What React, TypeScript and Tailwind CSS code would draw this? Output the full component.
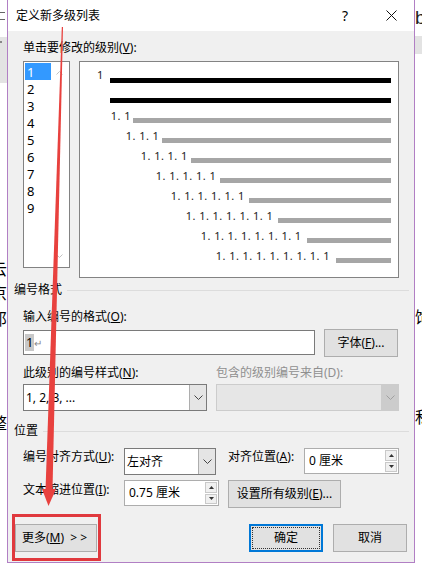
import React from 'react'

const Label = ({ children, className = '' }: { children: React.ReactNode; className?: string }) => (
  <div className={`text-[12px] leading-[16px] whitespace-nowrap ${className}`}>{children}</div>
)

const Btn = ({ children, className = '' }: { children: React.ReactNode; className?: string }) => (
  <div className={`flex items-center justify-center bg-[#e1e1e1] border border-[#adadad] text-[12px] leading-[16px] ${className}`}>
    {children}
  </div>
)

const Chevron = ({ color = '#555' }: { color?: string }) => (
  <svg width="9" height="5" viewBox="0 0 9 5">
    <path d="M0.5 0.5 L4.5 4.5 L8.5 0.5" fill="none" stroke={color} strokeWidth="1" />
  </svg>
)

const Select = ({ value, className = '', disabled = false }: { value: string; className?: string; disabled?: boolean }) => (
  <div
    className={`flex border ${disabled ? 'border-[#cccccc] bg-[#e6e6e6]' : 'border-[#7a7a7a] bg-white'} ${className}`}
  >
    <div className="flex-1 flex items-center pl-[2px] text-[12px] leading-[16px]">{value}</div>
    <div
      className={`w-[17px] flex items-center justify-center border-l ${
        disabled ? 'border-[#cccccc] bg-[#cccccc]' : 'border-[#adadad] bg-[#e5e5e5]'
      }`}
    >
      <Chevron color={disabled ? '#a0a0a0' : '#444'} />
    </div>
  </div>
)

const Spinner = ({ value, className = '' }: { value: string; className?: string }) => (
  <div className={`flex border border-[#adadad] bg-white ${className}`}>
    <div className="flex-1 flex items-center pl-[4px] text-[12px] leading-[16px]">{value}</div>
    <div className="w-[14px] flex flex-col gap-[1px] p-[1px]">
      <div className="flex-1 flex items-center justify-center bg-[#f0f0f0] border border-[#c9c9c9]">
        <svg width="5" height="3" viewBox="0 0 5 3">
          <path d="M0 3 L2.5 0 L5 3 Z" fill="#333" />
        </svg>
      </div>
      <div className="flex-1 flex items-center justify-center bg-[#f0f0f0] border border-[#c9c9c9]">
        <svg width="5" height="3" viewBox="0 0 5 3">
          <path d="M0 0 L2.5 3 L5 0 Z" fill="#333" />
        </svg>
      </div>
    </div>
  </div>
)

const Heading = ({ children }: { children: React.ReactNode }) => (
  <div className="flex items-center pl-[6px] pr-[5px]">
    <Label>{children}</Label>
    <div className="flex-1 h-px bg-[#dcdcdc] ml-[5px]" />
  </div>
)

const levels = ['1', '2', '3', '4', '5', '6', '7', '8', '9']

const Preview = () => {
  const rows = Array.from({ length: 8 }, (_, k) => Array(k + 2).fill('1').join('. '))
  return (
    <div className="w-[320px] h-[217px] ml-[9px] bg-white border border-[#838383] pt-[1px] pr-[7px] flex flex-col">
      <div className="h-[20px] flex items-end pl-[17px]">
        <span className="w-[13px] text-[11px] leading-[12px] text-[#222] mb-[2px]">1</span>
        <div className="flex-1 h-[5px] bg-black" />
      </div>
      <div className="h-[20px] flex items-end pl-[30px]">
        <div className="flex-1 h-[5px] bg-black" />
      </div>
      {rows.map((t, k) => (
        <div key={k} className="h-[20px] flex items-end" style={{ paddingLeft: 30.7 + 15 * k }}>
          <span
            className="shrink-0 text-[11px] leading-[12px] tracking-[0.45px] text-[#222] whitespace-nowrap mb-[1px]"
            style={{ width: 22.3 + 14 * k }}
          >
            {t}
          </span>
          <div className="flex-1 h-[5px] bg-[#a6a6a6]" />
        </div>
      ))}
    </div>
  )
}

const LevelList = () => (
  <div className="w-[47px] h-[207px] bg-white border border-[#828282] flex p-[1px]">
    <div className="w-[26px] flex flex-col">
      {levels.map((l, i) => (
        <div
          key={l}
          className={`h-[17px] flex items-center pl-[2px] text-[13px] leading-[16px] ${
            i === 0 ? 'bg-[#3399ff] text-white' : 'text-black'
          }`}
        >
          {l}
        </div>
      ))}
    </div>
    <div className="flex-1 flex flex-col items-center justify-between py-[8px]">
      <svg width="7" height="4" viewBox="0 0 7 4">
        <path d="M0.5 3.5 L3.5 0.5 L6.5 3.5" fill="none" stroke="#c2c2c2" />
      </svg>
      <svg width="7" height="4" viewBox="0 0 7 4">
        <path d="M0.5 0.5 L3.5 3.5 L6.5 0.5" fill="none" stroke="#c2c2c2" />
      </svg>
    </div>
  </div>
)

const Dialog = () => (
  <div className="w-[408px] h-[563px] shrink-0 border border-t-0 border-[#b17fc4] flex flex-col bg-[#f0f0f0]">
    <div className="h-[31px] bg-white flex items-center pl-[8px] pr-[15px]">
      <span className="flex-1 text-[12px] leading-[16px]">定义新多级列表</span>
      <span className="w-[16px] text-center text-[14px] leading-[16px]">?</span>
      <div className="ml-[30px] w-[16px] flex items-center justify-center">
        <svg width="11" height="11" viewBox="0 0 11 11">
          <path d="M0.5 0.5 L10.5 10.5 M10.5 0.5 L0.5 10.5" stroke="#111" strokeWidth="1" />
        </svg>
      </div>
    </div>

    <div className="flex-1 flex flex-col">
      <Label className="mt-[9px] pl-[15px]">
        单击要修改的级别(<u>V</u>):
      </Label>
      <div className="mt-[5px] pl-[15px] flex items-start">
        <LevelList />
        <Preview />
      </div>

      <div className="mt-[4px]">
        <Heading>编号格式</Heading>
      </div>
      <Label className="mt-[11px] pl-[15px]">
        输入编号的格式(<u>O</u>):
      </Label>
      <div className="mt-[4px] pl-[15px] flex items-start">
        <div className="w-[292px] h-[25px] mt-[1px] bg-white border border-[#7a7a7a] flex items-center pl-[1px]">
          <span className="bg-[#c8c8c8] text-[13px] leading-[17px] px-[1px]">1</span>
          <span className="text-[10px] leading-[14px] text-[#888]">↵</span>
        </div>
        <Btn className="ml-[9px] w-[74px] h-[28px]">
          字体(<u>F</u>)...
        </Btn>
      </div>

      <div className="mt-[8px] pl-[15px] flex">
        <Label className="w-[193px]">
          此级别的编号样式(<u>N</u>):
        </Label>
        <Label className="text-[#8f8f8f]">包含的级别编号来自(D):</Label>
      </div>
      <div className="mt-[3px] pl-[15px] flex">
        <Select value="1, 2, 3, ..." className="w-[184px] h-[27px]" />
        <Select value="" disabled className="ml-[9px] w-[183px] h-[27px]" />
      </div>

      <div className="mt-[12px]">
        <Heading>位置</Heading>
      </div>
      <div className="mt-[9px] pl-[15px] flex items-start h-[27px]">
        <Label className="w-[101px] mt-[1px]">
          编号对齐方式(<u>U</u>):
        </Label>
        <Select value="左对齐" className="w-[92px] h-[27px]" />
        <Label className="ml-[12px] w-[76px] mt-[1px]">
          对齐位置(<u>A</u>):
        </Label>
        <Spinner value="0 厘米" className="w-[95px] h-[26px]" />
      </div>
      <div className="mt-[5px] pl-[15px] flex items-start h-[28px]">
        <Label className="w-[101px] mt-[2px]">
          文本缩进位置(<u>I</u>):
        </Label>
        <Spinner value="0.75 厘米" className="w-[95px] h-[26px]" />
        <Btn className="ml-[9px] w-[113px] h-[28px]">
          设置所有级别(<u>E</u>)...
        </Btn>
      </div>

      <div className="mt-[16px] pl-[7px] pr-[7px] flex">
        <Btn className="w-[82px] h-[28px] justify-start pl-[6px]">
          更多(<u>M</u>)&nbsp;&nbsp;&gt; &gt;
        </Btn>
        <div className="flex-1" />
        <div className="w-[74px] h-[28px] bg-[#e1e1e1] border-2 border-[#0078d7] p-[1px]">
          <div className="w-full h-full border border-dotted border-[#333] flex items-center justify-center text-[12px] leading-[16px]">
            确定
          </div>
        </div>
        <Btn className="ml-[10px] w-[74px] h-[28px]">取消</Btn>
      </div>
    </div>
  </div>
)

const Frag = ({ c }: { c: string }) => (
  <div className="h-[24px] flex justify-end overflow-hidden">
    <span className="shrink-0 text-[16px] leading-[24px] [font-family:'Noto_Sans_CJK_SC',sans-serif]">{c}</span>
  </div>
)

const LeftStrip = () => (
  <div className="w-[7px] shrink-0 flex flex-col bg-white">
    <div className="h-[12px]" />
    <div className="h-px w-[5px] bg-[#666]" />
    <div className="h-[6px]" />
    <div className="h-px w-[5px] bg-[#666]" />
    <div className="h-[17px]" />
    <div className="h-[46px] bg-[#e3e3e3] flex flex-col">
      <div className="mt-[4px] h-[2px] w-[2px] bg-[#888]" />
    </div>
    <div className="h-[173px]" />
    <Frag c="云" />
    <Frag c="京" />
    <div className="h-[2px]" />
    <Frag c="邓" />
    <div className="h-[80px]" />
    <Frag c="整" />
  </div>
)

const RightStrip = () => (
  <div className="flex-1 flex flex-col bg-white overflow-hidden">
    <div className="h-[8px]" />
    <span className="text-[19px] leading-[20px] text-[#222] [font-family:'Liberation_Sans',sans-serif]">b</span>
    <div className="h-[8px]" />
    <div className="h-[18px] bg-[#e3e3e3]" />
    <div className="h-[250px]" />
    <span className="shrink-0 text-[16px] leading-[24px] [font-family:'Noto_Sans_CJK_SC',sans-serif] whitespace-nowrap">饰</span>
    <div className="h-[76px]" />
    <span className="shrink-0 text-[16px] leading-[24px] [font-family:'Noto_Sans_CJK_SC',sans-serif] whitespace-nowrap">私</span>
  </div>
)

export default function App() {
  return (
    <div className="relative w-[422px] h-[571px] overflow-hidden bg-white flex text-black [font-family:'Noto_Sans','Noto_Sans_CJK_SC',sans-serif]">
      <LeftStrip />
      <Dialog />
      <RightStrip />
      <svg className="absolute left-0 top-0 pointer-events-none" width="422" height="571" viewBox="0 0 422 571">
        <polygon points="61.8,27 63,27 52.5,490 45.5,490" fill="#e8413e" />
        <polygon points="42,489 56,489 48.5,506" fill="#e8413e" />
      </svg>
      <div className="absolute left-[12px] top-[514px] w-[89px] h-[47px] border-[3px] border-[#e0393e] pointer-events-none" />
    </div>
  )
}
